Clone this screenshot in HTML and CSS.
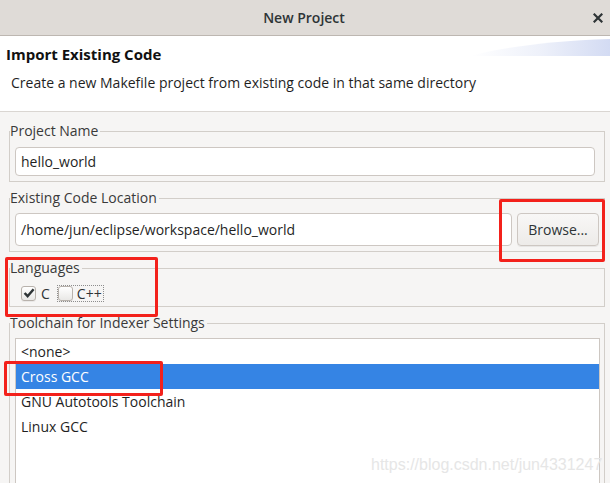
FILE: index.html
```html
<!DOCTYPE html>
<html>
<head>
<meta charset="utf-8">
<link rel="stylesheet" href="styles.css">
</head>
<body>
<div class="titlebar">
  <span></span>
  <span class="title">New Project</span>
  <span class="close"><svg width="10" height="10" viewBox="0 0 10 10"><path d="M1.5 1.5 L8.5 8.5 M8.5 1.5 L1.5 8.5" stroke="#2e3436" stroke-width="2.2" stroke-linecap="square"/></svg></span>
</div>
<div class="header">
  <svg class="swoosh" width="140" height="20" viewBox="0 0 140 20">
    <defs>
      <linearGradient id="sw" x1="0" y1="0" x2="1" y2="0">
        <stop offset="0" stop-color="#ffffff"/>
        <stop offset="0.5" stop-color="#eef1fa"/>
        <stop offset="1" stop-color="#d3dbf3"/>
      </linearGradient>
    </defs>
    <path d="M0 19 C35 10 80 4 140 2 L140 19 Z" fill="url(#sw)"/>
  </svg>
  <h1 class="heading">Import Existing Code</h1>
  <p class="desc">Create a new Makefile project from existing code in that same directory</p>
</div>
<div class="content">
  <fieldset class="group g-name">
    <legend>Project Name</legend>
    <div class="gbody">
      <div class="textfield">hello_world</div>
    </div>
  </fieldset>
  <fieldset class="group g-loc">
    <legend>Existing Code Location</legend>
    <div class="gbody row">
      <div class="textfield grow">/home/jun/eclipse/workspace/hello_world</div>
      <div class="button">Browse...</div>
    </div>
  </fieldset>
  <fieldset class="group g-lang">
    <legend>Languages</legend>
    <div class="gbody checks">
      <div class="check">
        <span class="cb"><svg width="14" height="14" viewBox="0 0 14 14"><path d="M2.6 7 L5.6 10.2 L11.6 3.2" fill="none" stroke="#2e3436" stroke-width="2.5"/></svg></span>
        <span>C</span>
      </div>
      <div class="check focus">
        <span class="cb"></span>
        <span>C++</span>
      </div>
    </div>
  </fieldset>
  <fieldset class="group g-tool">
    <legend>Toolchain for Indexer Settings</legend>
    <div class="gbody">
      <div class="list">
        <div class="item">&lt;none&gt;</div>
        <div class="item selected">Cross GCC</div>
        <div class="item">GNU Autotools Toolchain</div>
        <div class="item">Linux GCC</div>
      </div>
    </div>
  </fieldset>
</div>
<div class="mark mark-browse"></div>
<div class="mark mark-lang"></div>
<div class="mark mark-gcc"></div>
<div class="watermark">https://blog.csdn.net/jun4331247</div>
</body>
</html>
```

FILE: styles.css
```css
html, body {
  margin: 0;
  padding: 0;
}
body {
  width: 610px;
  height: 483px;
  overflow: hidden;
  position: relative;
  background: #f6f5f4;
  font-family: "Open Sans", "Noto Sans", sans-serif;
  font-size: 14px;
  color: #2e3436;
}
.titlebar {
  height: 35px;
  border-bottom: 1px solid #bdb7b1;
  background: #dfdbd7;
  display: grid;
  grid-template-columns: 1fr auto 1fr;
  align-items: center;
}
.title {
  font-weight: 600;
  font-size: 14px;
  color: #2e3436;
  padding-right: 2px;
}
.close {
  justify-self: end;
  padding-right: 7px;
  display: flex;
  align-items: center;
}
.header {
  height: 75px;
  background: #ffffff;
  border-bottom: 1px solid #dad6d2;
  position: relative;
  overflow: hidden;
}
.swoosh {
  position: absolute;
  right: 0;
  top: 1px;
}
.heading {
  margin: 0;
  padding: 8px 0 0 6px;
  font-size: 15px;
  font-weight: bold;
  line-height: 20px;
  color: #111111;
  position: relative;
}
.desc {
  margin: 9px 0 0 11px;
  line-height: 20px;
  color: #1f1f1f;
}
.content {
  padding: 0 5px 0 9px;
}
.group {
  margin: 7px 0 0 0;
  padding: 0;
  border: 1px solid #d2cec9;
  min-width: 0;
}
.g-name {
  margin-top: 10px;
}
.group legend {
  padding: 0 2px 0 0;
  line-height: 18px;
  color: #3a3a3a;
}
.gbody {
  padding: 7px 9px 5px 5px;
}
.g-loc .gbody {
  padding: 6px 5px 5px 5px;
}
.g-lang .gbody {
  padding: 8px 5px 5px 11px;
}
.g-tool .gbody {
  padding: 6px 4px 0 5px;
}
.row {
  display: flex;
  gap: 5px;
}
.textfield {
  height: 27px;
  line-height: 27px;
  border: 1px solid #cdc7c2;
  border-radius: 4px;
  background: #ffffff;
  padding: 0 5px;
  color: #1f1f1f;
}
.g-loc .textfield {
  height: 31px;
  line-height: 31px;
}
.grow {
  flex: 1;
}
.button {
  width: 80px;
  height: 31px;
  line-height: 31px;
  text-align: center;
  border: 1px solid #cdc7c2;
  border-radius: 4px;
  background: linear-gradient(#f8f7f6, #edebe9);
  box-shadow: 0 1px 0 rgba(0, 0, 0, 0.06);
  color: #2e3436;
}
.checks {
  display: flex;
  align-items: center;
  gap: 8px;
  height: 16px;
}
.check {
  display: flex;
  align-items: center;
  gap: 5px;
  height: 15px;
}
.check.focus {
  gap: 4px;
  outline: 1px dotted #8d8d8d;
  padding-right: 1px;
}
.cb {
  flex: 0 0 auto;
  box-sizing: border-box;
  width: 15px;
  height: 15px;
  border: 1px solid #b8b2ac;
  border-radius: 3px;
  background: linear-gradient(#ffffff, #e9e8e6);
  box-shadow: 0 1px 0 rgba(0, 0, 0, 0.05);
  display: flex;
  align-items: center;
  justify-content: center;
}
.cb svg {
  flex: 0 0 auto;
}
.list {
  height: 200px;
  border: 1px solid #cdc7c2;
  background: #ffffff;
}
.item {
  height: 25px;
  line-height: 25px;
  padding-left: 5px;
  color: #1f1f1f;
}
.item.selected {
  background: #3584e4;
  color: #ffffff;
}
.mark {
  position: absolute;
  border: 3px solid #f3211b;
  border-radius: 2px;
}
.mark-browse {
  left: 499px;
  top: 199px;
  width: 100px;
  height: 57px;
}
.mark-lang {
  left: 5px;
  top: 257px;
  width: 147px;
  height: 54px;
}
.mark-gcc {
  left: 4px;
  top: 361px;
  width: 153px;
  height: 29px;
}
.watermark {
  position: absolute;
  left: 371px;
  top: 455px;
  font-family: "Liberation Sans", Arial, sans-serif;
  font-size: 16px;
  line-height: 20px;
  color: #e6e6e6;
}
```
